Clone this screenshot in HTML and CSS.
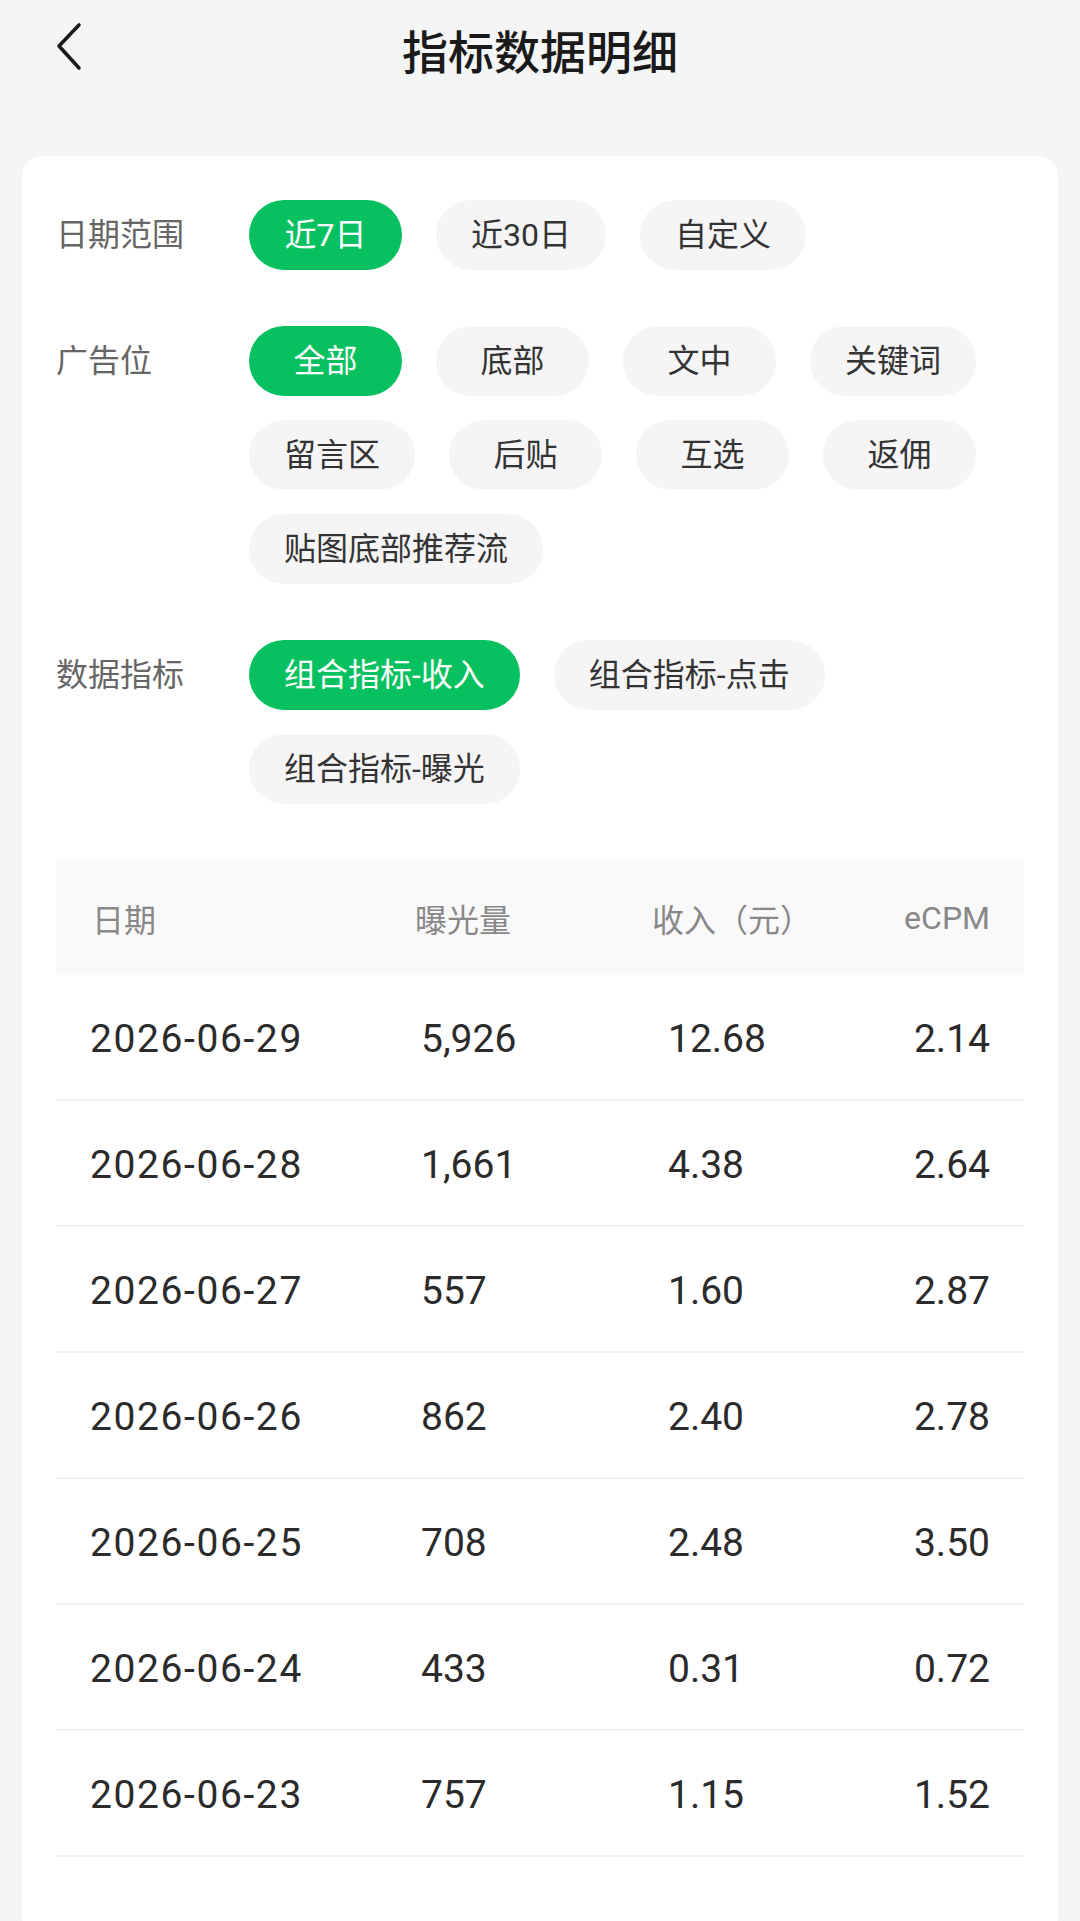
FILE: index.html
```html
<!DOCTYPE html>
<html lang="zh-CN">
<head>
    <meta charset="UTF-8">
    <meta name="viewport" content="width=device-width, initial-scale=1.0">
    <title>指标数据明细</title>
    <link rel="stylesheet" href="styles.css">
</head>
<body>
    <div class="nav">
        <span class="back">
            <svg width="30" height="50" viewBox="0 0 30 50">
                <polyline points="23,3 3,24 23,46" fill="none" stroke="#1a1a1a" stroke-width="3.6" stroke-linecap="round" stroke-linejoin="round"/>
            </svg>
        </span>
        <div class="title">指标数据明细</div>
    </div>

    <div class="card">
        <div class="filter">
            <div class="filter-label">日期范围</div>
            <div class="chips">
                <span class="chip active">近7日</span>
                <span class="chip">近30日</span>
                <span class="chip">自定义</span>
            </div>
        </div>
        <div class="filter">
            <div class="filter-label">广告位</div>
            <div class="chips">
                <span class="chip active">全部</span>
                <span class="chip">底部</span>
                <span class="chip">文中</span>
                <span class="chip">关键词</span>
                <span class="chip">留言区</span>
                <span class="chip">后贴</span>
                <span class="chip">互选</span>
                <span class="chip">返佣</span>
                <span class="chip">贴图底部推荐流</span>
            </div>
        </div>
        <div class="filter">
            <div class="filter-label">数据指标</div>
            <div class="chips">
                <span class="chip active">组合指标-收入</span>
                <span class="chip">组合指标-点击</span>
                <span class="chip">组合指标-曝光</span>
            </div>
        </div>

        <div class="table">
            <div class="table-head">
                <span class="c-date">日期</span>
                <span class="c-exp">曝光量</span>
                <span class="c-inc">收入（元）</span>
                <span class="c-ecpm">eCPM</span>
            </div>
            <div class="table-row">
                <span class="c-date">2026-06-29</span>
                <span class="c-exp">5,926</span>
                <span class="c-inc">12.68</span>
                <span class="c-ecpm">2.14</span>
            </div>
            <div class="table-row">
                <span class="c-date">2026-06-28</span>
                <span class="c-exp">1,661</span>
                <span class="c-inc">4.38</span>
                <span class="c-ecpm">2.64</span>
            </div>
            <div class="table-row">
                <span class="c-date">2026-06-27</span>
                <span class="c-exp">557</span>
                <span class="c-inc">1.60</span>
                <span class="c-ecpm">2.87</span>
            </div>
            <div class="table-row">
                <span class="c-date">2026-06-26</span>
                <span class="c-exp">862</span>
                <span class="c-inc">2.40</span>
                <span class="c-ecpm">2.78</span>
            </div>
            <div class="table-row">
                <span class="c-date">2026-06-25</span>
                <span class="c-exp">708</span>
                <span class="c-inc">2.48</span>
                <span class="c-ecpm">3.50</span>
            </div>
            <div class="table-row">
                <span class="c-date">2026-06-24</span>
                <span class="c-exp">433</span>
                <span class="c-inc">0.31</span>
                <span class="c-ecpm">0.72</span>
            </div>
            <div class="table-row">
                <span class="c-date">2026-06-23</span>
                <span class="c-exp">757</span>
                <span class="c-inc">1.15</span>
                <span class="c-ecpm">1.52</span>
            </div>
        </div>
    </div>
</body>
</html>
```

FILE: styles.css
```css
body {
    margin: 0;
    padding: 0;
    background-color: #f4f6f6;
    font-family: Roboto, "Noto Sans CJK SC", sans-serif;
    color: #333;
}
.nav {
    position: relative;
    height: 98px;
    display: flex;
    align-items: center;
    justify-content: center;
}
.back {
    position: absolute;
    left: 56px;
    top: 22px;
    width: 30px;
    height: 50px;
}
.title {
    font-size: 46px;
    font-weight: 500;
    color: #1a1a1a;
}
.card {
    margin: 58px 22px 0;
    min-height: 1780px;
    background: white;
    border-radius: 20px;
    padding: 44px 34px 0;
    box-sizing: border-box;
}
.filter {
    display: flex;
    margin-bottom: 56px;
}
.filter-label {
    width: 193px;
    flex-shrink: 0;
    font-size: 32px;
    line-height: 70px;
    color: #666;
}
.chips {
    display: flex;
    flex-wrap: wrap;
    gap: 24px 34px;
}
.chip {
    min-width: 153px;
    height: 70px;
    line-height: 70px;
    padding: 0 35px;
    box-sizing: border-box;
    border-radius: 35px;
    background-color: #f5f5f5;
    font-size: 32px;
    color: #333;
    text-align: center;
}
.chip.active {
    background-color: #07c160;
    color: white;
}
.table-head,
.table-row {
    display: grid;
    grid-template-columns: 355px 240px 1fr auto;
    align-items: center;
}
.table-head {
    height: 115px;
    background-color: #f9f9f9;
    font-size: 32px;
    color: #888;
}
.table-head .c-date {
    padding-left: 36px;
}
.table-head .c-exp {
    padding-left: 4px;
}
.table-head .c-inc {
    padding-left: 1px;
}
.table-row {
    height: 126px;
    border-bottom: 2px solid #f0f0f0;
    font-size: 39px;
    color: #2b2b2b;
    padding-top: 3px;
    box-sizing: border-box;
}
.table-row .c-date {
    padding-left: 34px;
    letter-spacing: 1.6px;
}
.table-row .c-exp {
    padding-left: 10px;
}
.table-row .c-inc {
    padding-left: 17px;
}
.c-ecpm {
    padding-right: 34px;
    text-align: right;
}
```
